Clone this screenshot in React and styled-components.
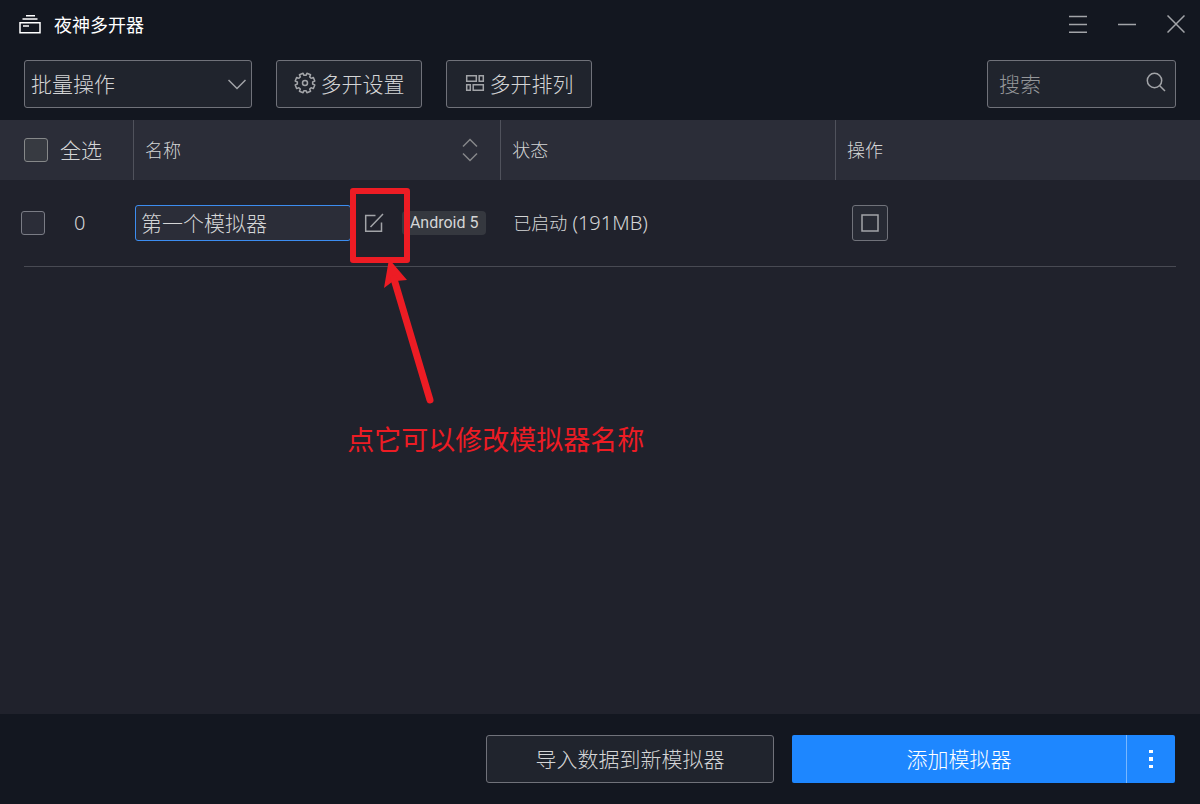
import React, { useState } from "react";
import styled, { createGlobalStyle } from "styled-components";

const GlobalStyle = createGlobalStyle`
  * {
    box-sizing: border-box;
  }

  body {
    margin: 0;
    background: #20222c;
    color: #d4d5d6;
    font-family: "Noto Sans CJK SC", sans-serif;
    font-weight: 300;
    font-size: 21px;
    line-height: 30px;
  }

  button, input, select {
    margin: 0;
    font: inherit;
    color: inherit;
  }
`;

const Window = styled.div`
  display: flex;
  flex-direction: column;
  min-height: 100vh;
`;

const TitleBar = styled.header`
  display: flex;
  align-items: center;
  justify-content: space-between;
  height: 48px;
  padding-left: 18px;
  background: #131720;
`;

const Brand = styled.div`
  display: flex;
  align-items: center;
  gap: 12px;
`;

const Title = styled.h1`
  margin: 0;
  font-size: 18px;
  font-weight: 400;
  color: #fff;
`;

const WindowControls = styled.div`
  display: flex;
  gap: 1px;
`;

const IconButton = styled.button`
  display: flex;
  align-items: center;
  justify-content: center;
  width: 48px;
  height: 48px;
  padding: 0;
  border: 0;
  background: transparent;
  color: #a2a4a8;
`;

const Toolbar = styled.div`
  display: flex;
  gap: 24px;
  padding: 12px 24px;
  background: #131720;
`;

const SelectBox = styled.div`
  position: relative;
  width: 228px;

  svg {
    position: absolute;
    top: 18px;
    right: 6px;
    pointer-events: none;
    color: #a2a4a8;
  }
`;

const Select = styled.select`
  appearance: none;
  width: 100%;
  height: 48px;
  padding: 0 30px 2px 6px;
  border: 1px solid #70727a;
  border-radius: 3px;
  background: #20242d;
`;

const Button = styled.button`
  display: flex;
  align-items: center;
  justify-content: center;
  gap: 5px;
  width: ${(props) => props.$width};
  height: 48px;
  padding: 0 0 2px;
  border: 1px solid #70727a;
  border-radius: 3px;
  background: #20242d;

  svg {
    color: #a2a4a8;
  }
`;

const SearchBox = styled.div`
  position: relative;
  width: 189px;
  margin-left: auto;

  svg {
    position: absolute;
    top: 12px;
    right: 10px;
    color: #a2a4a8;
  }
`;

const SearchInput = styled.input`
  width: 100%;
  height: 48px;
  padding: 0 36px 2px 11px;
  border: 1px solid #70727a;
  border-radius: 3px;
  background: #20242d;

  &::placeholder {
    color: #95979a;
    opacity: 1;
  }
`;

const Content = styled.main`
  flex: 1;
`;

const Table = styled.table`
  width: 100%;
  table-layout: fixed;
  border-collapse: separate;
  border-spacing: 0;
`;

const HeadCell = styled.th`
  width: ${(props) => props.$width || "auto"};
  height: 60px;
  padding: 0 12px 0 11px;
  border-right: ${(props) => (props.$last ? "0" : "1px solid #50525c")};
  background: #2b2d38;
  font-size: 18px;
  font-weight: 300;
  text-align: left;
`;

const HeadContent = styled.div`
  display: flex;
  align-items: center;
  justify-content: space-between;
`;

const HeadText = styled.span`
  display: block;
  padding-bottom: 2px;
`;

const SortButton = styled(IconButton)`
  width: 36px;
  height: 36px;
`;

const CheckLabel = styled.label`
  display: flex;
  align-items: center;
  gap: 12px;
  padding-left: 13px;
  font-size: 21px;
`;

const Checkbox = styled.input`
  appearance: none;
  width: 24px;
  height: 24px;
  border: 1px solid ${(props) => (props.$muted ? "#7a7c85" : "#868889")};
  border-radius: 3px;
  background: ${(props) => (props.$muted ? "#2b2d38" : "#373a41")};

  &:checked {
    background: #1e87ff;
  }
`;

const Row = styled.tr`
  background: linear-gradient(#484a53, #484a53) no-repeat center bottom /
    calc(100% - 48px) 1px;
`;

const Cell = styled.td`
  height: 87px;
  padding: 0 ${(props) => props.$right || "0"} 2px ${(props) => props.$left};
  font-family: "Noto Sans", "Noto Sans CJK SC", sans-serif;
  font-size: 18px;
`;

const Memory = styled.span`
  font-size: 20px;
`;

const IndexLabel = styled.label`
  display: flex;
  align-items: center;
  gap: 29px;
  font-size: 20px;
`;

const NameBox = styled.div`
  display: flex;
  align-items: center;
`;

const NameInput = styled.input`
  flex: 1;
  min-width: 0;
  height: 36px;
  padding: 0 5px 2px;
  border: 1px solid #3c8df0;
  border-radius: 3px;
  background: #2b2d38;
  font-family: "Noto Sans CJK SC", sans-serif;
  font-size: 21px;
  outline: none;
`;

const EditArea = styled.div`
  position: relative;
  width: 51px;
`;

const EditButton = styled(IconButton)`
  width: 46px;
`;

const Tag = styled.span`
  width: 84px;
  border-radius: 4px;
  background: #35383f;
  font-family: Roboto, sans-serif;
  font-size: 16px;
  font-weight: 400;
  line-height: 24px;
  text-align: center;
  white-space: nowrap;
`;

/* red marker drawn over the edit button */
const Marker = styled.div`
  position: absolute;
  top: -11px;
  left: -1px;
  width: 60px;
  height: 75px;
  border: 6px solid #ed1c24;
  border-radius: 3px;
  pointer-events: none;
`;

const Hint = styled.div`
  position: absolute;
  top: 60px;
  left: -4px;
  color: #ed1c24;
  font-family: "Noto Sans CJK SC", sans-serif;
  font-size: 27px;
  font-weight: 400;
  line-height: 36px;
  white-space: nowrap;
  pointer-events: none;

  svg {
    display: block;
    margin: 0 0 16px 33px;
  }
`;

const ActionButton = styled(IconButton)`
  width: 36px;
  height: 36px;
  border: 1px solid #70727a;
  border-radius: 3px;
  background: #272a34;
`;

const Footer = styled.footer`
  display: flex;
  justify-content: flex-end;
  gap: 18px;
  padding: 21px 25px 21px 24px;
  background: #131720;
`;

const SplitButton = styled.div`
  display: flex;
  width: 383px;
  border-radius: 2px;
  overflow: hidden;
  color: #fff;
`;

const AddButton = styled.button`
  flex: 1;
  padding: 0 0 2px;
  border: 0;
  border-right: 1px solid #78b7ff;
  background: #1e87ff;
`;

const MoreButton = styled(IconButton)`
  background: #1e87ff;
  color: #fff;
`;

const Icon = ({ width, height, children }) => (
  <svg
    width={width}
    height={height}
    viewBox={`0 0 ${width} ${height}`}
    fill="none"
    stroke="currentColor"
    strokeWidth="1.5"
    aria-hidden="true"
  >
    {children}
  </svg>
);

const LogoIcon = () => (
  <Icon width={24} height={20}>
    <path d="M8 1.7h9M4.5 5h15M2 8.7h20v10H2zM5 12h6" stroke="#fff" />
  </Icon>
);

// outline of an eight-tooth gear
const gearPath = () => {
  const points = [];
  for (let i = 0; i < 8; i++) {
    const base = ((i + 0.5) * Math.PI) / 4;
    [[-0.26, 7.7], [-0.2, 10], [0.2, 10], [0.26, 7.7]].forEach(([turn, r]) => {
      points.push(
        `${(11 + r * Math.sin(base + turn)).toFixed(2)} ${(11 - r * Math.cos(base + turn)).toFixed(2)}`
      );
    });
  }
  return `M${points.join("L")}Z`;
};

const GearIcon = () => (
  <Icon width={22} height={22}>
    <path d={gearPath()} strokeLinejoin="round" />
    <circle cx="11" cy="11" r="2.5" />
  </Icon>
);

const LayoutIcon = () => (
  <Icon width={20} height={20}>
    <path d="M1.7 2.7h9.6v5.6H1.7zM14.2 2.7h4.1v5.6h-4.1zM1.7 11.7h3.6v5.6H1.7zM8.2 11.7h10.1v5.6H8.2z" />
  </Icon>
);

const App = () => {
  const [name, setName] = useState("第一个模拟器");

  return (
    <Window>
      <GlobalStyle />
      <TitleBar>
        <Brand>
          <LogoIcon />
          <Title>夜神多开器</Title>
        </Brand>
        <WindowControls>
          <IconButton aria-label="菜单">
            <Icon width={18} height={18}>
              <path d="M0 1.5h18M0 9.5h18M0 17.2h18" />
            </Icon>
          </IconButton>
          <IconButton aria-label="最小化">
            <Icon width={18} height={18}>
              <path d="M0 9.5h18" />
            </Icon>
          </IconButton>
          <IconButton aria-label="关闭">
            <Icon width={18} height={18}>
              <path d="M.5 .5l17 17M17.5 .5l-17 17" />
            </Icon>
          </IconButton>
        </WindowControls>
      </TitleBar>

      <Toolbar>
        <SelectBox>
          <Select aria-label="批量操作">
            <option>批量操作</option>
          </Select>
          <Icon width={18} height={12}>
            <path d="M.5 2l8.5 8.5 8.5-8.5" />
          </Icon>
        </SelectBox>
        <Button $width="146px">
          <GearIcon />
          多开设置
        </Button>
        <Button $width="146px">
          <LayoutIcon />
          多开排列
        </Button>
        <SearchBox>
          <SearchInput type="search" placeholder="搜索" aria-label="搜索" />
          <Icon width={20} height={20}>
            <circle cx="8.5" cy="8.5" r="7.2" />
            <path d="M13.7 13.7l5.3 5.3" />
          </Icon>
        </SearchBox>
      </Toolbar>

      <Content>
        <Table>
          <thead>
            <tr>
              <HeadCell $width="134px">
                <CheckLabel>
                  <Checkbox type="checkbox" />
                  <HeadText>全选</HeadText>
                </CheckLabel>
              </HeadCell>
              <HeadCell $width="30.6%">
                <HeadContent>
                  <HeadText>名称</HeadText>
                  <SortButton aria-label="排序">
                    <Icon width={16} height={24}>
                      <path d="M1 8.5l7-7 7 7M1 15.5l7 7 7-7" stroke="#868789" />
                    </Icon>
                  </SortButton>
                </HeadContent>
              </HeadCell>
              <HeadCell $width="27.9%">
                <HeadText>状态</HeadText>
              </HeadCell>
              <HeadCell $last>
                <HeadText>操作</HeadText>
              </HeadCell>
            </tr>
          </thead>
          <tbody>
            <Row>
              <Cell $left="21px">
                <IndexLabel>
                  <Checkbox type="checkbox" $muted />
                  0
                </IndexLabel>
              </Cell>
              <Cell $left="1px" $right="15px">
                <NameBox>
                  <NameInput
                    aria-label="名称"
                    value={name}
                    onChange={(e) => setName(e.target.value)}
                  />
                  <EditArea>
                    <EditButton aria-label="修改名称">
                      <Icon width={20} height={20}>
                        <path d="M11.5 2.5H1.7v15.8h15.8V9.5M6.5 14L19 1" />
                      </Icon>
                    </EditButton>
                    <Marker />
                    <Hint>
                      <svg width="60" height="146" viewBox="0 0 60 146" fill="#ed1c24">
                        <path d="M9 0l18 21-11 1-4 1-8 6z" />
                        <path
                          d="M14 20l36 121"
                          stroke="#ed1c24"
                          strokeWidth="7"
                          strokeLinecap="round"
                        />
                      </svg>
                      点它可以修改模拟器名称
                    </Hint>
                  </EditArea>
                  <Tag>Android 5</Tag>
                </NameBox>
              </Cell>
              <Cell $left="12px">
                已启动<Memory> (191MB)</Memory>
              </Cell>
              <Cell $left="16px">
                <ActionButton aria-label="停止">
                  <Icon width={18} height={18}>
                    <path d="M1 1h16v16H1z" />
                  </Icon>
                </ActionButton>
              </Cell>
            </Row>
          </tbody>
        </Table>
      </Content>

      <Footer>
        <Button $width="288px">导入数据到新模拟器</Button>
        <SplitButton>
          <AddButton>添加模拟器</AddButton>
          <MoreButton aria-label="更多">
            <svg width="4" height="18" viewBox="0 0 4 18" fill="currentColor">
              <path d="M0 0h4v3H0zM0 7h4v4H0zM0 15h4v3H0z" />
            </svg>
          </MoreButton>
        </SplitButton>
      </Footer>
    </Window>
  );
};

export default App;
